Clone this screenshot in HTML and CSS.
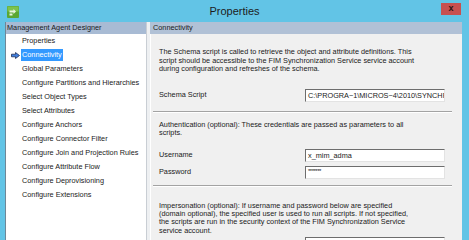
FILE: index.html
```
<!DOCTYPE html>
<html lang="en">

<head>
  <meta charset="UTF-8">
  <title>Properties</title>
  <link rel="stylesheet" href="styles.css">
</head>

<body>

  <div class="window">
    <div class="titlebar">
      <div class="app-icon">
        <svg width="12" height="12" viewBox="0 0 12 12">
          <rect x="0" y="0" width="12" height="12" rx="1" fill="#5aa733" />
          <rect x="0.5" y="0.5" width="11" height="5" fill="#7cc24f" />
          <path d="M2.5 4.5h4v-1.5l2.5 2.5-2.5 2.5v-1.5h-4z" fill="#e9f5df" />
          <rect x="2.5" y="7.5" width="3" height="2" fill="#e9f5df" />
        </svg>
      </div>
      <div class="title">Properties</div>
      <div class="close">x</div>
    </div>

    <div class="client">
      <div class="nav">
        <div class="nav-head">Management Agent Designer</div>
        <ul class="nav-list">
          <li><span class="nav-icon"></span><span class="nav-text">Properties</span></li>
          <li class="current">
            <span class="nav-icon">
              <svg width="9" height="7" viewBox="0 0 9 7">
                <path d="M0.5 2.2h4v-1.7l4 3-4 3v-1.7h-4z" fill="#3f7fe0" stroke="#1f2f55" stroke-width="0.8" />
              </svg>
            </span>
            <span class="nav-text">Connectivity</span>
          </li>
          <li><span class="nav-icon"></span><span class="nav-text">Global Parameters</span></li>
          <li><span class="nav-icon"></span><span class="nav-text">Configure Partitions and Hierarchies</span></li>
          <li><span class="nav-icon"></span><span class="nav-text">Select Object Types</span></li>
          <li><span class="nav-icon"></span><span class="nav-text">Select Attributes</span></li>
          <li><span class="nav-icon"></span><span class="nav-text">Configure Anchors</span></li>
          <li><span class="nav-icon"></span><span class="nav-text">Configure Connector Filter</span></li>
          <li><span class="nav-icon"></span><span class="nav-text">Configure Join and Projection Rules</span></li>
          <li><span class="nav-icon"></span><span class="nav-text">Configure Attribute Flow</span></li>
          <li><span class="nav-icon"></span><span class="nav-text">Configure Deprovisioning</span></li>
          <li><span class="nav-icon"></span><span class="nav-text">Configure Extensions</span></li>
        </ul>
      </div>

      <div class="splitter"></div>

      <div class="page">
        <div class="page-head">Connectivity</div>
        <div class="page-body">
          <p class="first">The Schema script is called to retrieve the object and attribute definitions. This<br>
            script should be accessible to the FIM Synchronization Service service account<br>
            during configuration and refreshes of the schema.</p>

          <div class="field schema">
            <label>Schema Script</label>
            <div class="input">C:\PROGRA~1\MICROS~4\2010\SYNCHRONIZATION SERVICE\EXTENSIONS\schema.ps1</div>
          </div>

          <hr>

          <p class="auth">Authentication (optional): These credentials are passed as parameters to all<br>
            scripts.</p>

          <div class="field user">
            <label>Username</label>
            <div class="input">x_mim_adma</div>
          </div>
          <div class="field pass">
            <label>Password</label>
            <div class="input secret">*******</div>
          </div>

          <hr class="sep2">

          <p class="imp">Impersonation (optional): If username and password below are specified<br>
            (domain optional), the specified user is used to run all scripts. If not specified,<br>
            the scripts are run in the security context of the FIM Synchronization Service<br>
            service account.</p>

          <div class="field domain">
            <label>Domain (impersonate)</label>
            <div class="input"></div>
          </div>
        </div>
      </div>
    </div>
  </div>

</body>

</html>
```

FILE: styles.css
```
body {
  margin: 0;
  background-color: #62c4e6;
  font-family: 'Liberation Sans', Arial, sans-serif;
  color: #1a1a1a;
}

.window {
  width: 469px;
  height: 240px;
  display: flex;
  flex-direction: column;
  overflow: hidden;
}

.titlebar {
  flex: none;
  height: 22px;
  display: grid;
  grid-template-columns: 1fr auto 1fr;
  align-items: start;
}

.app-icon {
  margin: 6px 0 0 7px;
  width: 12px;
  height: 12px;
}

.app-icon svg {
  display: block;
}

.title {
  font-size: 11px;
  line-height: 22px;
  color: #1d1d1d;
}

.close {
  justify-self: end;
  margin: 3px 8px 0 0;
  width: 20px;
  height: 12px;
  background-color: #c75050;
  color: #2a1414;
  font-size: 9px;
  font-weight: bold;
  line-height: 11px;
  text-align: center;
}

.client {
  flex: 1;
  min-height: 0;
  display: flex;
  margin: 0 7px 0 5px;
  border-left: 1px solid #6f8797;
}

/* left side: designer steps */
.nav {
  width: 140px;
  background-color: #fff;
  display: flex;
  flex-direction: column;
  font-size: 7.3px;
}

.nav-head {
  height: 12px;
  line-height: 12px;
  background-color: #a8bbd4;
  padding-left: 1px;
  white-space: nowrap;
}

.nav-list {
  list-style: none;
  margin: 0;
  padding: 0;
}

.nav-list li {
  display: flex;
  align-items: center;
  height: 14px;
  padding-left: 5px;
  white-space: nowrap;
}

.nav-icon {
  width: 10px;
  display: flex;
  align-items: center;
}

.nav-text {
  padding: 0 1px;
  line-height: 12px;
}

.current .nav-text {
  background-color: #3399ff;
  color: #fff;
}

.splitter {
  width: 3px;
  background-color: #eef0f2;
  border-left: 1px solid #c9ced4;
}

/* right side: page */
.page {
  flex: 1;
  display: flex;
  flex-direction: column;
  font-size: 7.3px;
}

.page-head {
  height: 12px;
  line-height: 12px;
  background-color: #b1c1d6;
  padding-left: 3px;
}

.page-body {
  flex: 1;
  background-color: #f0f0f0;
  border-left: 1px solid #fff;
  padding: 14px 0 0 8px;
  line-height: 8.6px;
  white-space: nowrap;
}

.page-body p {
  margin: 0;
}

.page-body hr {
  margin: 9px 10px 0 -6px;
  border: 0;
  border-top: 1px solid #a3a3a3;
  border-bottom: 1px solid #fff;
}

.field {
  display: flex;
  align-items: center;
}

.field label {
  width: 146px;
}

.input {
  width: 140px;
  height: 13px;
  box-sizing: border-box;
  background-color: #fff;
  border-top: 1px solid #6d6d6d;
  border-left: 1px solid #6d6d6d;
  border-right: 1px solid #e3e3e3;
  border-bottom: 1px solid #e3e3e3;
  padding-left: 2px;
  line-height: 11px;
  overflow: hidden;
}

.input.secret {
  font-size: 6px;
  line-height: 8px;
  letter-spacing: -0.5px;
}

.schema {
  margin-top: 15px;
}

.page-body .auth {
  margin-top: 8px;
}

.user {
  margin-top: 11px;
}

.pass {
  margin-top: 4px;
}

.page-body .sep2 {
  margin-top: 6px;
}

.page-body .imp {
  margin-top: 15px;
  line-height: 8.2px;
}

.domain {
  margin-top: 2px;
}
```
